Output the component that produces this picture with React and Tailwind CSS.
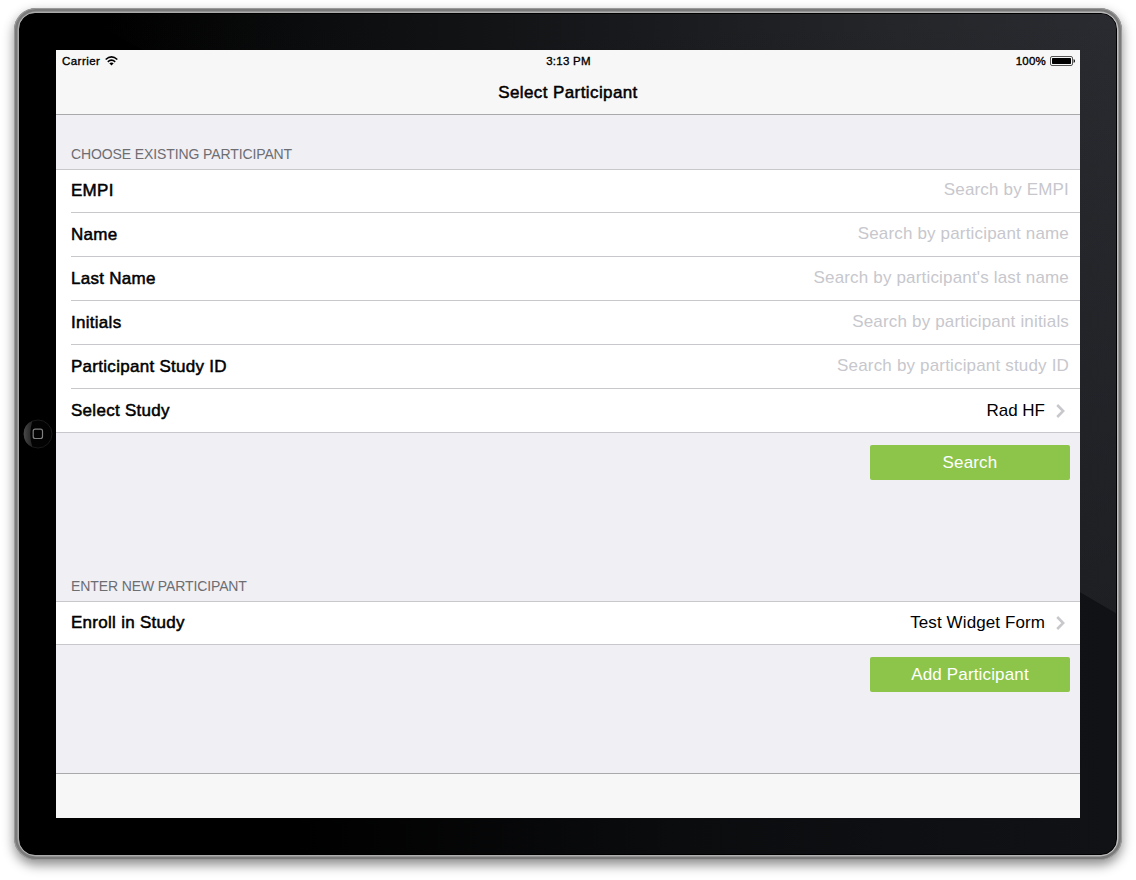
const fields = [
  ["EMPI", "Search by EMPI"],
  ["Name", "Search by participant name"],
  ["Last Name", "Search by participant's last name"],
  ["Initials", "Search by participant initials"],
  ["Participant Study ID", "Search by participant study ID"],
];

const medium = "[-webkit-text-stroke:0.5px_#000] text-black";
const status = "[-webkit-text-stroke:0.35px_#000] text-black";

function Chevron() {
  return (
    <svg width="9" height="14" viewBox="0 0 9 14" className="ml-[11px] mr-1 shrink-0" fill="none" stroke="#c7c7cc" strokeWidth="2.5">
      <path d="M1.2 1 L7.2 7 L1.2 13" />
    </svg>
  );
}

function Row({ label, children, last, height = "h-11" }) {
  return (
    <div className={`ml-[15px] flex ${height} items-center justify-between pr-[11px] text-[17px] leading-5 ${last ? "" : "border-b border-[#c8c7cc]"}`}>
      <span className={`tracking-[0.28px] ${medium}`}>{label}</span>
      {children}
    </div>
  );
}

function SectionTitle({ children, className }) {
  return <h2 className={`pl-[15px] text-[14px] leading-4 tracking-[-0.11px] text-[#6d6d72] ${className}`}>{children}</h2>;
}

function GreenButton({ children }) {
  return (
    <button className="mr-2.5 mt-3 flex h-[35px] w-[200px] items-center justify-center self-end rounded-[2px] bg-[#8dc54b] text-[17px] tracking-[0.15px] text-white">
      {children}
    </button>
  );
}

function StatusBar() {
  return (
    <div className="grid h-[22px] grid-cols-3 items-center pl-1.5 pr-[5px] text-[11.5px] leading-[22px]">
      <div className={`flex items-center gap-[5px] ${status}`}>
        <span className="tracking-[0.45px]">Carrier</span>
        <svg width="13" height="10" viewBox="0 0 13 10" fill="none" stroke="#000" strokeWidth="1.6">
          <path d="M0.7 3.5 Q6.5 -1.7 12.3 3.5" />
          <path d="M2.8 5.8 Q6.5 2.5 10.2 5.8" />
          <path d="M4.3 7.3 Q6.5 5.5 8.7 7.3 L6.5 9.5Z" fill="#000" stroke="none" />
        </svg>
      </div>
      <div className={`text-center tracking-[0.25px] ${status}`}>3:13 PM</div>
      <div className={`flex items-center justify-end gap-1 ${status}`}>
        <span className="tracking-[0.2px]">100%</span>
        <svg width="25" height="10" viewBox="0 0 25 10">
          <rect x="0.5" y="0.5" width="22" height="9" rx="1.5" fill="none" stroke="#555" />
          <rect x="2" y="2" width="19" height="6" rx="0.7" />
          <path d="M23.6 3 Q25 3.5 25 5 Q25 6.5 23.6 7Z" />
        </svg>
      </div>
    </div>
  );
}

function HomeButton() {
  return (
    <svg width="30" height="30" viewBox="0 0 30 30">
      <defs>
        <linearGradient id="home" x1="0" x2="1">
          <stop offset="0" stopColor="#484848" />
          <stop offset="1" stopColor="#222" />
        </linearGradient>
      </defs>
      <circle cx="15" cy="15" r="14" fill="#030303" stroke="#191919" />
      <path d="M9.5 1.8 A14.3 14.3 0 0 0 9.5 28.2 Q5 15 9.5 1.8Z" fill="url(#home)" />
      <rect x="10.2" y="10.2" width="9.3" height="9.3" rx="2" fill="none" stroke="#808080" strokeWidth="1.2" />
    </svg>
  );
}

export default function App() {
  return (
    <div className="h-[880px] w-[1136px] overflow-hidden bg-white pl-3.5 pt-2 font-['Liberation_Sans',Arial,sans-serif]">
      <div className="h-[852px] w-[1108px] rounded-[22px] bg-[linear-gradient(90deg,#aaa_0,#aaa_40px,#b4b4b4_1070px,#c0bebe_100%)] p-[5px] shadow-[0_5px_12px_rgba(0,0,0,0.45),inset_0_0_0_1px_#9a9a9a,inset_0_0_0_3.5px_#7a7a7a]">
        <div className="relative grid h-full w-full grid-cols-[36px_1024px_36px] grid-rows-[36px_768px_36px] overflow-hidden rounded-[16px] border border-black bg-[linear-gradient(90deg,#000_0%,#000_25%,#0b0c0e_60%,#111216_100%)]">
          <div className="absolute inset-0 bg-[linear-gradient(180deg,rgba(18,19,22,0)_0%,rgba(18,19,22,0.5)_72%),linear-gradient(90deg,#000_0%,#000_8%,#0c0d0e_28%,#18191c_55%,#25262a_80%,#2a2b30_100%)] [clip-path:polygon(60px_0,1096px_0,1096px_599px,1060px_578px)]" />
          <div className="col-start-1 row-start-2 flex items-center justify-center">
            <HomeButton />
          </div>
          <main className="relative col-start-2 row-start-2 flex flex-col bg-[#efeff4]">
            <header className="h-[65px] border-b border-[#a9a9ac] bg-[#f7f7f7]">
              <StatusBar />
              <h1 className={`text-center text-[17px] leading-[42px] tracking-[0.4px] ${medium}`}>Select Participant</h1>
            </header>
            <SectionTitle className="mt-[31px]">CHOOSE EXISTING PARTICIPANT</SectionTitle>
            <section className="mt-[7px] border-y border-[#c8c7cc] bg-white">
              {fields.map(([label, hint], i) => (
                <Row key={label} label={label} height={i === 0 ? "h-[43px]" : "h-11"}>
                  <span className="pb-0.5 tracking-[0.17px] text-[#c7c7cd]">{hint}</span>
                </Row>
              ))}
              <Row label="Select Study" last height="h-[43px]">
                <span className="flex items-center">Rad HF<Chevron /></span>
              </Row>
            </section>
            <GreenButton>Search</GreenButton>
            <SectionTitle className="mt-[98px]">ENTER NEW PARTICIPANT</SectionTitle>
            <section className="mt-[7px] border-y border-[#c8c7cc] bg-white">
              <Row label="Enroll in Study" last height="h-[42px]">
                <span className="flex items-center tracking-[0.1px]">Test Widget Form<Chevron /></span>
              </Row>
            </section>
            <GreenButton>Add Participant</GreenButton>
            <footer className="mt-auto h-[45px] border-t border-[#a9a9ac] bg-[#f7f7f7]" />
          </main>
        </div>
      </div>
    </div>
  );
}
